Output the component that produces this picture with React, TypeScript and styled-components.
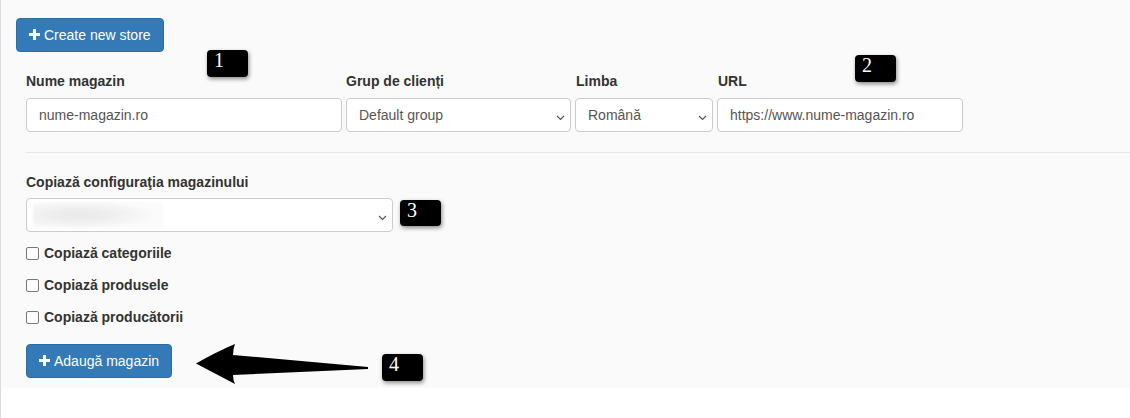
import React from "react";
import styled, { createGlobalStyle } from "styled-components";

const Global = createGlobalStyle`
  html, body { margin: 0; padding: 0; background: #ffffff; }
  body { font-family: "Liberation Sans", Arial, sans-serif; font-size: 14px; color: #333; }
  * { box-sizing: border-box; }
`;

const Page = styled.div`
  position: relative;
  width: 1130px;
  min-height: 418px;
  border-left: 1px solid #dcdcdc;
`;

const Panel = styled.div`
  background: #fafafa;
  padding: 18px 0 10px 15px;
`;

const PrimaryButton = styled.button`
  display: inline-flex;
  align-items: center;
  gap: 4px;
  height: 34px;
  padding: 0 12px;
  background: #337ab7;
  border: 1px solid #2e6da4;
  border-radius: 4px;
  color: #fff;
  font-family: "Liberation Sans", Arial, sans-serif;
  font-size: 14px;
  line-height: 20px;
  cursor: pointer;
`;

const Form = styled.div`
  padding-left: 10px;
`;

const FieldRow = styled.div`
  display: grid;
  grid-template-columns: 316px 225px 138px 246px;
  column-gap: 4px;
  margin-top: 19px;
`;

const Field = styled.div<{ $shift?: number }>`
  display: flex;
  flex-direction: column;
  padding-left: ${(p) => p.$shift ?? 0}px;
`;

const Label = styled.label<{ $indent?: number }>`
  display: block;
  font-weight: bold;
  font-size: 14px;
  line-height: 20px;
  color: #333;
  margin-bottom: 7px;
  padding-left: ${(p) => p.$indent ?? 0}px;
`;

const Control = styled.div<{ $width?: number }>`
  display: flex;
  align-items: center;
  height: 34px;
  width: ${(p) => (p.$width ? `${p.$width}px` : "100%")};
  padding: 0 4px 0 12px;
  background: #fff;
  border: 1px solid #ccc;
  border-radius: 4px;
  color: #555;
  font-size: 14px;
  line-height: 20px;
  white-space: nowrap;
`;

const ControlText = styled.span`
  flex: 1;
`;

const Chevron = styled.svg`
  width: 9px;
  height: 6px;
  margin-top: 5px;
  margin-right: 1px;
  flex: none;
`;

const Divider = styled.hr`
  margin: 20px 0 0 0;
  border: 0;
  border-top: 1px solid #e8e8e8;
`;

const CopySection = styled.div`
  padding-top: 19px;
`;

const CopyLabel = styled(Label)`
  margin-bottom: 6px;
`;

const BlurredValue = styled.span`
  width: 130px;
  height: 26px;
  margin-left: -6px;
  background: radial-gradient(
    ellipse 60% 55% at 35% 50%,
    #e9e9e9 0%,
    #efefef 45%,
    #f6f6f6 80%,
    #fbfbfb 100%
  );
  filter: blur(1px);
`;

const Checks = styled.div`
  display: flex;
  flex-direction: column;
  gap: 12px;
  margin-top: 11px;
`;

const CheckRow = styled.label`
  display: flex;
  align-items: center;
  gap: 5px;
  height: 20px;
  font-weight: bold;
  font-size: 14px;
  color: #333;
`;

const CheckBox = styled.span`
  width: 13px;
  height: 13px;
  border: 1px solid #7a7680;
  border-radius: 2px;
  background: #fff;
  flex: none;
`;

const SubmitWrap = styled.div`
  margin-top: 17px;
`;

const Badge = styled.div<{ $x: number; $y: number; $h?: number }>`
  position: absolute;
  left: ${(p) => p.$x}px;
  top: ${(p) => p.$y}px;
  width: 41px;
  height: ${(p) => p.$h ?? 27}px;
  padding-left: 7px;
  background: #000;
  color: #fff;
  border-radius: 4px;
  box-shadow: 1px 2px 4px rgba(0, 0, 0, 0.45);
  font-family: "Liberation Serif", "DejaVu Serif", serif;
  font-size: 20px;
  line-height: 20px;
`;

const ArrowSvg = styled.svg`
  position: absolute;
  left: 189px;
  top: 340px;
  width: 185px;
  height: 50px;
`;

const Plus = () => (
  <svg width="11" height="11" viewBox="0 0 11 11" style={{ marginTop: -1 }}>
    <path d="M4 0h3v4h4v3H7v4H4V7H0V4h4z" fill="#fff" />
  </svg>
);

const SelectChevron = () => (
  <Chevron viewBox="0 0 9 6">
    <path d="M1 1l3.5 3.5L8 1" stroke="#555" strokeWidth="1.2" fill="none" />
  </Chevron>
);

export default function App() {
  return (
    <>
      <Global />
      <Page>
        <Panel>
          <PrimaryButton>
            <Plus />
            <span>Create new store</span>
          </PrimaryButton>
          <Form>
            <FieldRow>
              <Field>
                <Label>Nume magazin</Label>
                <Control>nume-magazin.ro</Control>
              </Field>
              <Field>
                <Label>Grup de clienți</Label>
                <Control>
                  <ControlText>Default group</ControlText>
                  <SelectChevron />
                </Control>
              </Field>
              <Field>
                <Label $indent={1}>Limba</Label>
                <Control>
                  <ControlText>Română</ControlText>
                  <SelectChevron />
                </Control>
              </Field>
              <Field>
                <Label $indent={1}>URL</Label>
                <Control>https://www.nume-magazin.ro</Control>
              </Field>
            </FieldRow>
            <Divider />
            <CopySection>
              <CopyLabel>Copiază configuraţia magazinului</CopyLabel>
              <Control $width={367}>
                <BlurredValue />
                <ControlText />
                <SelectChevron />
              </Control>
              <Checks>
                <CheckRow>
                  <CheckBox />
                  Copiază categoriile
                </CheckRow>
                <CheckRow>
                  <CheckBox />
                  Copiază produsele
                </CheckRow>
                <CheckRow>
                  <CheckBox />
                  Copiază producătorii
                </CheckRow>
              </Checks>
              <SubmitWrap>
                <PrimaryButton>
                  <Plus />
                  <span>Adaugă magazin</span>
                </PrimaryButton>
              </SubmitWrap>
            </CopySection>
          </Form>
        </Panel>
        <Badge $x={206} $y={50}>1</Badge>
        <Badge $x={854} $y={55}>2</Badge>
        <Badge $x={399} $y={200} $h={26}>3</Badge>
        <Badge $x={381} $y={354}>4</Badge>
        <ArrowSvg viewBox="0 0 185 50">
          <path
            d="M6 23.5 Q26 12 45 4 Q43 9 43 15 L178 27 L178 29 L43 35 Q43 40 45 44 Q26 34 6 23.5 Z"
            fill="#000"
          />
        </ArrowSvg>
      </Page>
    </>
  );
}
